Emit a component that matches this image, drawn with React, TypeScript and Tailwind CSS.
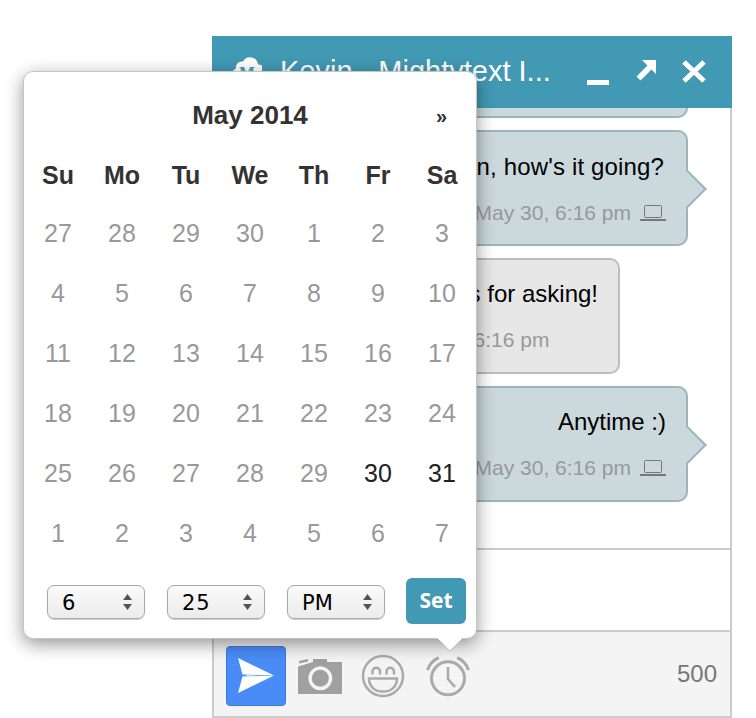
const WEEKDAYS = ["Su", "Mo", "Tu", "We", "Th", "Fr", "Sa"];

const DAYS = [
  [27, 28, 29, 30, 1, 2, 3],
  [4, 5, 6, 7, 8, 9, 10],
  [11, 12, 13, 14, 15, 16, 17],
  [18, 19, 20, 21, 22, 23, 24],
  [25, 26, 27, 28, 29, 30, 31],
  [1, 2, 3, 4, 5, 6, 7],
];

const LaptopIcon = () => (
  <svg width="26" height="18" viewBox="0 0 26 18" className="text-[#777]" fill="none">
    <rect x="4.5" y="1.5" width="17" height="12" rx="1" stroke="currentColor" strokeWidth="1" />
    <rect x="0" y="15" width="26" height="2" rx="0.5" fill="currentColor" />
  </svg>
);

const Bubble = ({
  text,
  mine = true,
  className = "",
  textClassName = "",
}: {
  text: string;
  mine?: boolean;
  className?: string;
  textClassName?: string;
}) => (
  <div
    className={`relative h-[116px] shrink-0 rounded-[10px] border-2 px-[20px] pt-[16px] ${
      mine
        ? "w-[260px] border-[#9db4be] bg-[#cbd8dc]"
        : "mr-[68px] w-[246px] border-[#bdbdbd] bg-[#e7e7e7]"
    } ${className}`}
  >
    <div className={`flex justify-end whitespace-nowrap text-[24px] leading-[36px] text-black ${textClassName}`}>{text}</div>
    <div
      className={`mt-[10px] flex items-center gap-[9px] whitespace-nowrap text-[21px] leading-[36px] text-[#999] ${
        mine ? "justify-end" : "ml-[-3px]"
      }`}
    >
      May 30, 6:16 pm
      {mine && <LaptopIcon />}
    </div>
    {mine && (
      <div className="absolute right-[-15px] top-[43px] h-[28px] w-[28px] rotate-45 border-r-2 border-t-2 border-[#9db4be] bg-[#cbd8dc]" />
    )}
  </div>
);

const TimeSelect = ({ value, spaced = false }: { value: string; spaced?: boolean }) => (
  <div className="flex h-[34px] w-[98px] items-center justify-between rounded-[7px] border border-[#a9a9a9] bg-gradient-to-b from-[#fafafa] to-[#ececec] pl-[14px] pr-[12px] font-['DejaVu_Sans',sans-serif] text-[21px] text-black shadow-[0_1px_1px_rgba(0,0,0,0.2)]">
    <span className={`pt-[3px] ${spaced ? "tracking-[1px]" : ""}`}>{value}</span>
    <svg width="9" height="16" viewBox="0 0 9 16" className="text-[#555]" fill="currentColor">
      <polygon points="4.5,0 9,6 0,6" />
      <polygon points="0,10 9,10 4.5,16" />
    </svg>
  </div>
);

const CalendarPopover = () => (
  <div className="absolute left-[23px] top-[71px] h-[568px] w-[454px] rounded-[10px] border border-[#c4c4c4] bg-white px-[2px] shadow-[0_5px_18px_rgba(0,0,0,0.42)]">
    <div className="relative flex h-[86px] items-center justify-center text-[26px] font-bold text-[#333]">
      May 2014
      <span className="absolute left-[410px] top-[29px] text-[20px] leading-[30px]">»</span>
    </div>
    <div className="grid grid-cols-[repeat(7,64px)] pt-[1px]">
      {WEEKDAYS.map((day) => (
        <div key={day} className="flex h-[34px] items-center justify-center text-[25px] font-bold text-[#333]">
          {day}
        </div>
      ))}
    </div>
    <div className="grid grid-cols-[repeat(7,64px)] pt-[11px]">
      {DAYS.flat().map((day, i) => (
        <div
          key={i}
          className={`flex h-[60px] items-center justify-center text-[25px] ${
            i === 33 || i === 34 ? "text-[#222]" : "text-[#999]"
          }`}
        >
          {day}
        </div>
      ))}
    </div>
    <div className="mt-[14px] flex items-center pl-[21px]">
      <div className="flex gap-[22px] pt-[2px]">
        <TimeSelect value="6" />
        <TimeSelect value="25" spaced />
        <TimeSelect value="PM" />
      </div>
      <button className="ml-[21px] h-[46px] w-[60px] rounded-[6px] bg-[#4299b4] font-['Open_Sans',sans-serif] text-[21px] font-bold text-white">
        Set
      </button>
    </div>
    <svg width="26" height="13" viewBox="0 0 26 13" className="absolute left-[413px] top-[566px]">
      <polygon points="0,0 26,0 13,13" fill="white" />
      <polyline points="0,0 13,13 26,0" fill="none" stroke="#bdbdbd" strokeWidth="1" />
    </svg>
  </div>
);

const App = () => {
  return (
    <div className="relative h-[718px] w-[756px] overflow-hidden bg-white font-['Liberation_Sans',Arial,sans-serif]">
      <div className="ml-[212px] pt-[36px]">
        <div className="flex h-[72px] w-[520px] items-center bg-[#4299b4] pl-[20px] text-white">
          <svg width="30" height="26" viewBox="0 0 30 26" className="mt-[-6px]">
            <path fill="white" d="M6 24a6 6 0 0 1-2-11.500 6 6 0 0 1 7-7 8 8 0 0 1 15 3 7 7 0 0 1 0 15.500z" />
            <text x="15" y="22" textAnchor="middle" fontFamily="Liberation Serif" fontWeight="bold" fontSize="17" fill="#4299b4">
              M
            </text>
          </svg>
          <span className="ml-[18px] w-[300px] whitespace-nowrap pb-[2px] text-[29px] leading-[34px]">
            Kevin - Mightytext I...
          </span>
          <div className="ml-[7px] mt-[20px] h-[5px] w-[22px] bg-white" />
          <svg width="24" height="24" viewBox="0 0 24 24" className="ml-[25px] mt-[-2px]" fill="white">
            <path d="M8 1h14v14l-4.500-4.500-11 11-4-4 11-11z" />
          </svg>
          <svg width="24" height="23" viewBox="0 0 24 23" className="ml-[24px] mt-[-1px]" fill="none" stroke="white" strokeWidth="5">
            <path d="M2 2 22 21M22 2 2 21" />
          </svg>
        </div>

        <div className="h-[610px] w-[520px] border-x-2 border-b-2 border-[#cccccc]">
          <div className="flex h-[440px] flex-col items-end gap-[12px] overflow-hidden pr-[42px]">
            <Bubble text="Hi there" className="mt-[-106px]" />
            <Bubble text="Hey Kevin, how's it going?" textClassName="mr-[2px] pt-[1px] tracking-[0.15px]" />
            <Bubble text="Thanks for asking!" mine={false} />
            <Bubble text="Anytime :)" />
          </div>
          <div className="h-[82px] border-t-2 border-[#cccccc] bg-white" />
          <div className="flex h-[86px] items-center border-t-2 border-[#cccccc] bg-[#f4f4f4] pl-[12px] pr-[13px] pt-[4px]">
            <div className="flex h-[60px] w-[60px] items-center justify-center rounded-[4px] border border-[#3b78e0] bg-[#4a8cf7]">
              <svg width="36" height="36" viewBox="0 0 36 36" className="ml-[-1px]">
                <polygon points="0,0 36,17.500 4.500,16.500" fill="white" />
                <polygon points="0,35 36,17.500 4.500,18.500" fill="white" />
                <polygon points="8,17 28,17.500 8,18" fill="#d5e4fd" />
              </svg>
            </div>
            <svg width="44" height="35" viewBox="0 0 44 35" className="ml-[12px]">
              <path
                fill="#a0a0a0"
                fillRule="evenodd"
                d="M15 3V0h14v3h15v32H0V7.500zM22.300 7.300a12 12 0 1 0 .01 0z"
              />
              <path fill="#a0a0a0" d="M1 2l9-2v2.500l-9 2z" />
              <circle cx="22.300" cy="19.300" r="8.500" fill="#a0a0a0" />
            </svg>
            <svg width="44" height="44" viewBox="0 0 44 44" className="ml-[19px]" fill="none" stroke="#aaa" strokeWidth="2.500">
              <circle cx="22" cy="22" r="20" />
              <path d="M11.500 20.500v-3a3.700 3.700 0 0 1 7.500 0v3M25.500 20.500v-3a3.700 3.700 0 0 1 7.500 0v3" />
              <path d="M8 24.600h28c0 8-6 13-14 13S8 32.600 8 24.600z" />
            </svg>
            <svg width="44" height="42" viewBox="0 0 44 42" className="ml-[21px]" fill="none" stroke="#aaa" strokeWidth="3">
              <circle cx="22" cy="23.300" r="16.500" />
              <path d="M22 12v12l7 8" strokeWidth="2.500" />
              <path d="M1.500 15Q4 7 12.700 2.700M42.500 15Q40 7 31.300 2.700" />
            </svg>
            <span className="mb-[4px] ml-auto text-[24px] text-[#777]">500</span>
          </div>
        </div>
      </div>

      <CalendarPopover />
    </div>
  );
};

export default App;
